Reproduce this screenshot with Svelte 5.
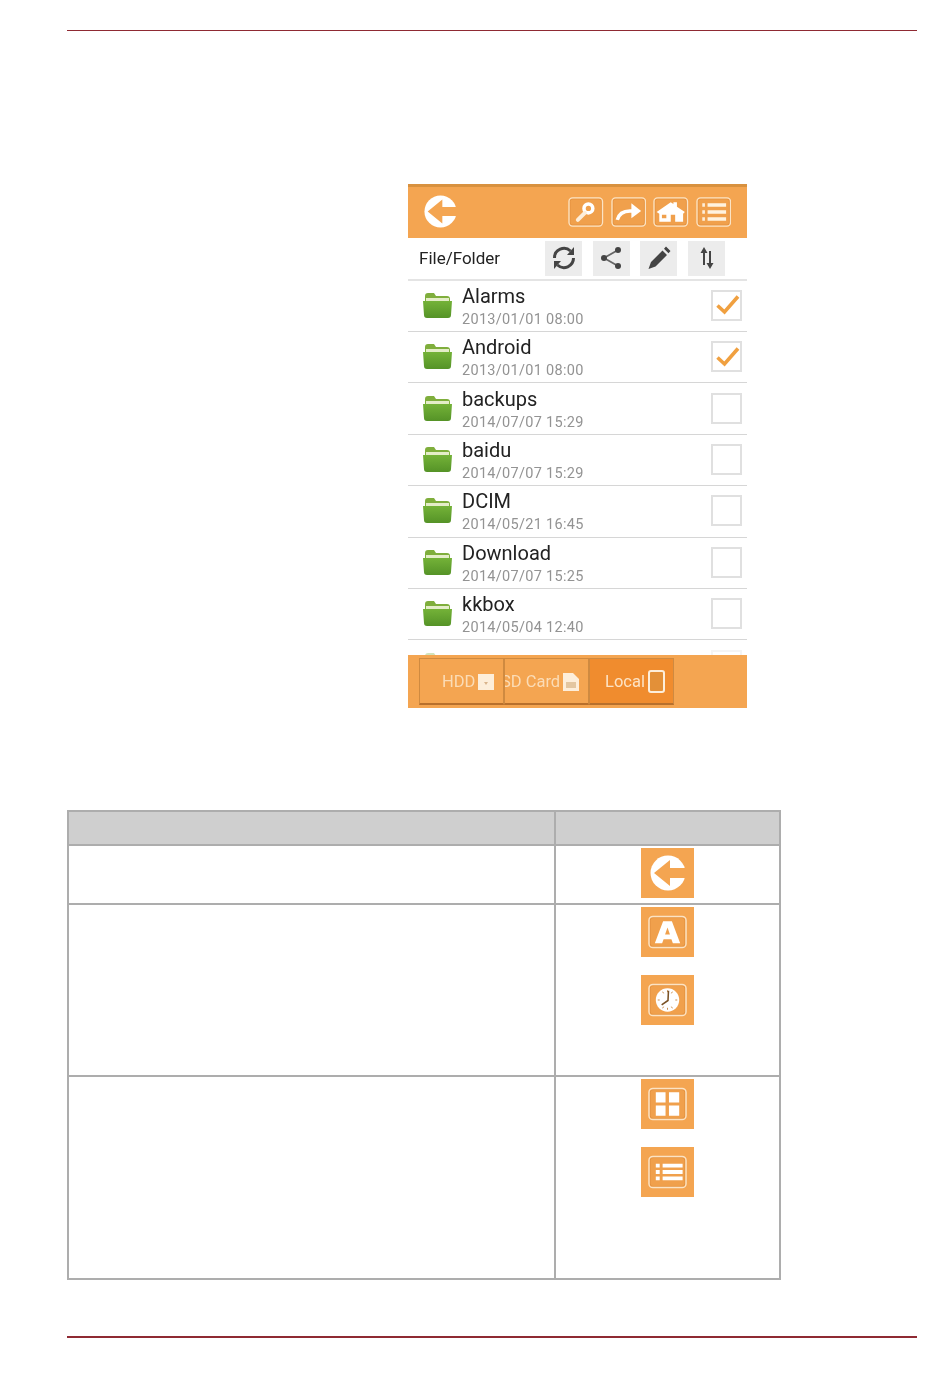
<script>
  const rows = [
    { name: 'Alarms', date: '2013/01/01 08:00', checked: true },
    { name: 'Android', date: '2013/01/01 08:00', checked: true },
    { name: 'backups', date: '2014/07/07 15:29', checked: false },
    { name: 'baidu', date: '2014/07/07 15:29', checked: false },
    { name: 'DCIM', date: '2014/05/21 16:45', checked: false },
    { name: 'Download', date: '2014/07/07 15:25', checked: false },
    { name: 'kkbox', date: '2014/05/04 12:40', checked: false },
    { name: 'media', date: '', checked: false }
  ];
</script>

{#snippet back(size)}
  <svg width={size} height={size} viewBox="0 0 36 36" aria-hidden="true">
    <circle cx="18" cy="18" r="17.500" fill="#fff"/>
    <path fill="#f4a551" d="M4 18L20 5v8h16v10H20v8z"/>
  </svg>
{/snippet}

{#snippet frame(inner)}
  <svg class="glyph" viewBox="0 0 40 34" aria-hidden="true">
    <rect x="2.200" y="2.200" width="35.600" height="29.600" rx="3" fill="#f0a04c" stroke="#e2913f" stroke-width="1"/>
    <rect x="1" y="1" width="38" height="32" rx="4" fill="none" stroke="#fbe3c4" stroke-width="1.500"/>
    {@render inner()}
  </svg>
{/snippet}

{#snippet listInner()}
  <path fill="#fff" d="M8 8.500h4v4H8zM8 15h4v4H8zM8 21.500h4v4H8zM15 8.500h20.500v4H15zM15 15h20.500v4H15zM15 21.500h20.500v4H15z"/>
{/snippet}
{#snippet gridInner()}
  <path fill="#fff" d="M8 5h10v10.500H8zM21.500 5H32v10.500H21.500zM8 18.500h10V29H8zM21.500 18.500H32V29H21.500z"/>
{/snippet}
{#snippet clockInner()}
  <circle cx="20" cy="17" r="12" fill="#fff"/>
  <path d="M20 7v2M20 25v2M10 17h2M28 17h2M15 8.500l1 1.700M25 8.500l-1 1.700M15 25.500l1-1.700M25 25.500l-1-1.700" stroke="#c98a4a" stroke-width="1"/>
  <path d="M21 7.500l-.5 10L14 22" fill="none" stroke="#7a5226" stroke-width="1.600"/>
{/snippet}
{#snippet letterInner()}
  <path fill="#fff" fill-rule="evenodd" d="M15.500 6h9L33 28.500h-7.500L24 24.500h-8l-1.500 4H7zM17.500 19.500h5L20 12.500z"/>
{/snippet}
{#snippet searchInner()}
  <circle cx="23" cy="13" r="5" fill="none" stroke="#fff" stroke-width="4"/>
  <path d="M19 18l-8 8" stroke="#fdeeda" stroke-width="4.500" stroke-linecap="round"/>
{/snippet}
{#snippet shareInner()}
  <path fill="none" stroke="#fff" stroke-width="4" d="M7 26c2-8 9-11 18-10"/>
  <path fill="#fff" d="M23 7l11 9-11 8z"/>
{/snippet}
{#snippet homeInner()}
  <path fill="#fff" fill-rule="evenodd" d="M4 17L20 6l3 2V6h4v5l9 6-2 2v9H25v-8h-5v8H7V19zM10 20h5v4h-5z"/>
{/snippet}
{#snippet menuInner()}
  <path fill="#fdeeda" d="M7 7h3v4H7zM7 15h3v4H7zM7 23h3v4H7z"/>
  <path fill="#fff3e0" d="M13 7h21v4H13zM13 15h21v4H13zM13 23h21v4H13z"/>
{/snippet}

<div class="page">
  <div class="rule top"></div>

  <section class="phone">
    <header class="bar">
      <span class="logo">{@render back(33)}</span>
      <div class="actions">
        <span class="action">{@render frame(searchInner)}</span>
        <span class="action">{@render frame(shareInner)}</span>
        <span class="action">{@render frame(homeInner)}</span>
        <span class="action">{@render frame(menuInner)}</span>
      </div>
    </header>

    <div class="tools">
      <span class="heading">File/Folder</span>
      <div class="tool-buttons">
        <span class="tool">
          <svg width="26" height="26" viewBox="0 0 26 26" aria-hidden="true">
            <path fill="none" stroke="#444" stroke-width="3" d="M3.500 13a9.500 9.500 0 0 1 16-7M22.500 13a9.500 9.500 0 0 1-16 7"/>
            <path fill="#444" d="M23 2v8h-7zM3 24v-8h7z"/>
          </svg>
        </span>
        <span class="tool">
          <svg width="26" height="26" viewBox="0 0 26 26" aria-hidden="true">
            <path stroke="#666" stroke-width="1.800" d="M6 13L20 5M6 13l14 8"/>
            <circle cx="6" cy="13" r="3" fill="#444"/><circle cx="20" cy="5" r="3" fill="#444"/><circle cx="20" cy="21" r="3" fill="#444"/>
          </svg>
        </span>
        <span class="tool">
          <svg width="26" height="26" viewBox="0 0 26 26" aria-hidden="true">
            <path fill="#444" d="M20 1.500l4.500 4.500-2 2.300L18 3.800zM16.500 5.500l4.500 4.500L9.500 21.500l-7 2.500 2.500-7z"/>
          </svg>
        </span>
        <span class="tool">
          <svg width="26" height="26" viewBox="0 0 26 26" aria-hidden="true">
            <path fill="#444" d="M10 2l3.500 6h-2.500v12H9V8H6.500zM16 24l-3.500-6H15V6h2v12h2.500z"/>
          </svg>
        </span>
      </div>
    </div>

    <ul class="files">
      {#each rows as row}
        <li class="file">
          <svg class="folder" viewBox="0 0 29 26" aria-hidden="true">
            <defs>
              <linearGradient id="front" x1="0" y1="0" x2="0" y2="1">
                <stop offset="0" stop-color="#74b238"/>
                <stop offset="1" stop-color="#559327"/>
              </linearGradient>
            </defs>
            <path fill="#7fae3c" d="M2 4q0-3 3-3h6l2 3h11q3 0 3 3v4H2z"/>
            <path fill="#e4edc8" d="M3 6h23v3H3z"/>
            <path fill="url(#front)" d="M0 9h29l-1 14q0 3-3 3H4q-3 0-3-3z"/>
          </svg>
          <div class="meta">
            <span class="name">{row.name}</span>
            <span class="date">{row.date}</span>
          </div>
          <span class="box">
            {#if row.checked}
              <svg width="26" height="26" viewBox="0 0 26 26" aria-hidden="true">
                <path fill="none" stroke="#f0a040" stroke-width="3.600" d="M3.500 13.500l7 6.500L24 4.500"/>
              </svg>
            {/if}
          </span>
        </li>
      {/each}
    </ul>

    <footer class="tabs">
      <span class="tab">
        <span class="label hdd">HDD</span>
        <svg width="16" height="16" viewBox="0 0 16 16" aria-hidden="true"><path fill="#fdeeda" d="M0 0h16v16H0z"/><path fill="#d9b48c" d="M6 8h4l-2 3z"/></svg>
      </span>
      <span class="tab">
        <span class="label sd">SD Card</span>
        <svg width="16" height="18" viewBox="0 0 16 18" aria-hidden="true"><path fill="#fdeeda" d="M0 0h10l6 6v12H0z"/><path fill="#e3c6a0" d="M3 9h10v6H3z"/></svg>
      </span>
      <span class="tab active">
        <span class="label local">Local</span>
        <svg width="17" height="23" viewBox="0 0 17 23" aria-hidden="true"><rect x="1" y="1" width="15" height="21" rx="2" fill="#e39038" stroke="#fdeeda" stroke-width="2"/></svg>
      </span>
    </footer>
  </section>

  <section class="legend">
    <div class="row head"><div class="left"></div><div class="right"></div></div>
    <div class="row r1">
      <div class="left"></div>
      <div class="right"><span class="swatch">{@render back(36)}</span></div>
    </div>
    <div class="row r2">
      <div class="left"></div>
      <div class="right">
        <span class="swatch">{@render frame(letterInner)}</span>
        <span class="swatch">{@render frame(clockInner)}</span>
      </div>
    </div>
    <div class="row r3">
      <div class="left"></div>
      <div class="right">
        <span class="swatch">{@render frame(gridInner)}</span>
        <span class="swatch">{@render frame(listInner)}</span>
      </div>
    </div>
  </section>

  <div class="rule bottom"></div>
</div>

<style>
  :global(body) { background: #fff; }
  .page {
    width: 950px;
    height: 1374px;
    box-sizing: border-box;
    padding: 30px 33px 0 67px;
    font-family: Roboto, "Liberation Sans", sans-serif;
  }
  .rule { height: 1px; background: #8f2a33; }
  .rule.top { margin-bottom: 153px; }
  .rule.bottom { height: 2px; margin-top: 56px; }

  .phone {
    width: 339px;
    height: 524px;
    margin-left: 341px;
    display: flex;
    flex-direction: column;
    filter: blur(0.6px);
  }
  .bar {
    height: 54px;
    flex: none;
    box-sizing: border-box;
    background: #f4a551;
    border-top: 3px solid #d8913f;
    display: flex;
    align-items: center;
    justify-content: space-between;
    padding: 0 16px 2px 16px;
  }
  .logo { display: flex; }
  .actions { display: flex; gap: 7px; }
  .action {
    width: 35.500px;
    height: 30px;
    display: flex;
  }
  .glyph { width: 100%; height: 100%; }

  .tools {
    height: 43px;
    flex: none;
    box-sizing: border-box;
    border-bottom: 2px solid #e4e4e4;
    display: flex;
    align-items: center;
    justify-content: space-between;
    padding: 0 22px 1px 11px;
  }
  .heading { font-size: 17px; color: #222; }
  .tool-buttons { display: flex; gap: 10.670px; }
  .tool {
    width: 37px;
    height: 35px;
    background: #ececec;
    display: flex;
    align-items: center;
    justify-content: center;
  }

  .files {
    flex: 1;
    min-height: 0;
    overflow: hidden;
    list-style: none;
    margin: -0.4px 0 0;
    padding: 0;
  }
  .file {
    height: 51.400px;
    box-sizing: border-box;
    border-bottom: 1px solid #d6d6d6;
    display: flex;
    align-items: center;
    padding: 0 5px 0 15px;
  }
  .file:last-child { opacity: 0.35; }
  .folder { width: 29px; height: 26px; flex: none; margin: 0 10px 2px 0; }
  .meta {
    flex: 1;
    display: flex;
    flex-direction: column;
    gap: 3px;
    padding-top: 1px;
  }
  .name { font-size: 20px; line-height: 24px; color: #222; }
  .date { font-size: 14.500px; line-height: 18px; color: #939393; letter-spacing: 0.3px; }
  .box {
    width: 31px;
    height: 31px;
    box-sizing: border-box;
    border: 2px solid #e0e0e0;
    margin-bottom: 1px;
    display: flex;
    align-items: center;
    justify-content: center;
  }

  .tabs {
    height: 53px;
    flex: none;
    box-sizing: border-box;
    background: #f4a551;
    padding: 3px 0 3px 11px;
    display: flex;
  }
  .tab {
    width: 85px;
    box-sizing: border-box;
    border: 1px solid #cf8a40;
    border-bottom: 2px solid #b8702c;
    display: flex;
    align-items: center;
    gap: 3px;
    padding-top: 1px;
    color: #fbdcb6;
    font-size: 16.500px;
    white-space: nowrap;
    overflow: hidden;
  }
  .label.hdd { margin-left: 22px; }
  .label.sd { margin-left: -4px; }
  .label.local { margin-left: 15px; }
  .tab.active { background: #f08c2e; color: #fde3c4; }

  .legend {
    width: 714px;
    box-sizing: border-box;
    margin-top: 102px;
    border: 2px solid #adadad;
  }
  .row { display: flex; border-bottom: 2px solid #adadad; box-sizing: border-box; }
  .row:last-child { border-bottom: 0; }
  .left { width: 487px; flex: none; box-sizing: border-box; border-right: 2px solid #adadad; }
  .right {
    flex: 1;
    box-sizing: border-box;
    padding-top: 2px;
    display: flex;
    flex-direction: column;
    align-items: center;
    gap: 18px;
  }
  .head { height: 34px; background: #cfcfcf; }
  .r1 { height: 59px; }
  .r2 { height: 172px; }
  .r3 { height: 201px; }
  .swatch {
    width: 53px;
    height: 50px;
    box-sizing: border-box;
    padding: 8px 7px;
    background: #f4a551;
    display: flex;
    align-items: center;
    justify-content: center;
    filter: blur(0.3px);
  }
</style>
